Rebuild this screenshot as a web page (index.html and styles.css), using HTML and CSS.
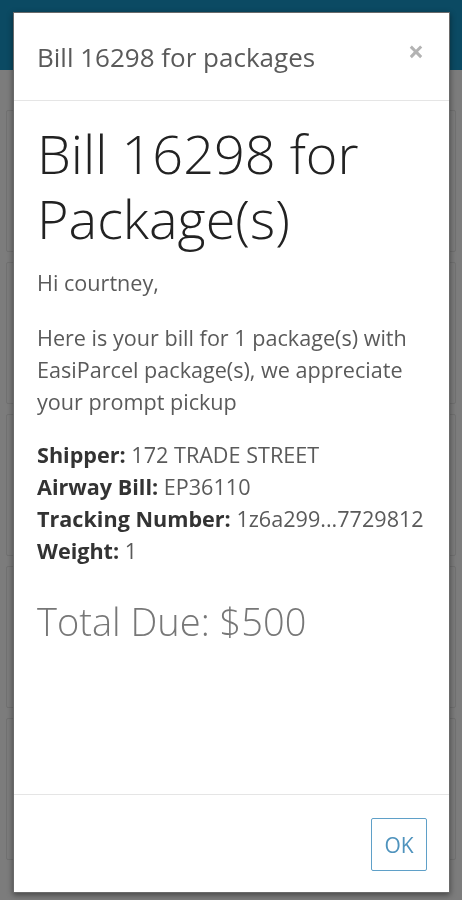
FILE: index.html
```html
<!DOCTYPE html>
<html>
<head>
<meta charset="utf-8">
<link rel="stylesheet" href="styles.css">
</head>
<body>
<div class="page">
  <div class="topbar"></div>
  <div class="list">
    <div class="card"></div>
    <div class="card"></div>
    <div class="card"></div>
    <div class="card"></div>
    <div class="card"></div>
  </div>
</div>
<div class="modal">
  <div class="modal-header">
    <h4 class="modal-title">Bill 16298 for packages</h4>
    <span class="close">&times;</span>
  </div>
  <div class="modal-body">
    <h1 class="bill-title">Bill 16298 for Package(s)</h1>
    <p class="text greet">Hi courtney,</p>
    <p class="text intro">Here is your bill for 1 package(s) with EasiParcel package(s), we appreciate your prompt pickup</p>
    <div class="details">
      <div><b>Shipper:</b> 172 TRADE STREET</div>
      <div><b>Airway Bill:</b> EP36110</div>
      <div><b>Tracking Number:</b> 1z6a299...7729812</div>
      <div><b>Weight:</b> 1</div>
    </div>
    <div class="total">Total Due: $500</div>
  </div>
  <div class="modal-footer">
    <button class="ok">OK</button>
  </div>
</div>
</body>
</html>
```
FILE: styles.css
```css
html, body {
  margin: 0;
  padding: 0;
  height: 100%;
  overflow: hidden;
  font-family: "Open Sans", "Liberation Sans", sans-serif;
}
.page {
  height: 900px;
  background: #7c7c7c;
}
.topbar {
  height: 70px;
  background: #0b4a63;
}
.list {
  display: flex;
  flex-direction: column;
  gap: 10px;
  padding: 40px 6px 0 6px;
}
.card {
  height: 140px;
  border: 1px solid #717171;
  border-radius: 2px;
}
.modal {
  position: fixed;
  left: 13px;
  top: 12px;
  width: 437px;
  height: 881px;
  background: #fff;
  box-shadow: 0 2px 6px rgba(0, 0, 0, 0.45);
  border: 1px solid #6a6a6a;
  box-sizing: border-box;
  display: flex;
  flex-direction: column;
}
.modal-header {
  display: flex;
  justify-content: space-between;
  align-items: flex-start;
  padding: 27px 24px 26px 23px;
  border-bottom: 1px solid #e5e5e5;
}
.modal-title {
  margin: 0;
  font-size: 26px;
  font-weight: 400;
  line-height: 34px;
  color: #5a5a5a;
}
.close {
  font-size: 28px;
  font-weight: 700;
  color: #b3b3b3;
  line-height: 24px;
  margin-top: -1px;
  margin-right: 1px;
}
.modal-body {
  flex: 1;
  padding: 20px 24px 0 23px;
  color: #5a5a5a;
}
.bill-title {
  margin: 0 0 16px 0;
  font-size: 54px;
  font-weight: 300;
  line-height: 65px;
  color: #222;
}
.text {
  margin: 0;
  font-size: 21.6px;
  line-height: 32px;
}
.greet {
  margin-bottom: 23px;
}
.intro {
  margin-bottom: 21px;
}
.details {
  font-size: 21.6px;
  line-height: 32px;
}
.details b {
  font-weight: 700;
  color: #333;
}
.total {
  margin-top: 32px;
  font-size: 38px;
  font-weight: 300;
  line-height: 44px;
  color: #777;
}
.modal-footer {
  height: 98px;
  border-top: 1px solid #e5e5e5;
  display: flex;
  justify-content: flex-end;
  align-items: flex-start;
  padding: 23px 22px 0 0;
  box-sizing: border-box;
}
.ok {
  width: 56px;
  height: 53px;
  background: #fff;
  border: 1px solid #5fa0c8;
  border-radius: 2px;
  color: #4f93bd;
  font-family: "Open Sans", "Liberation Sans", sans-serif;
  font-size: 21px;
  padding: 0;
}
```
